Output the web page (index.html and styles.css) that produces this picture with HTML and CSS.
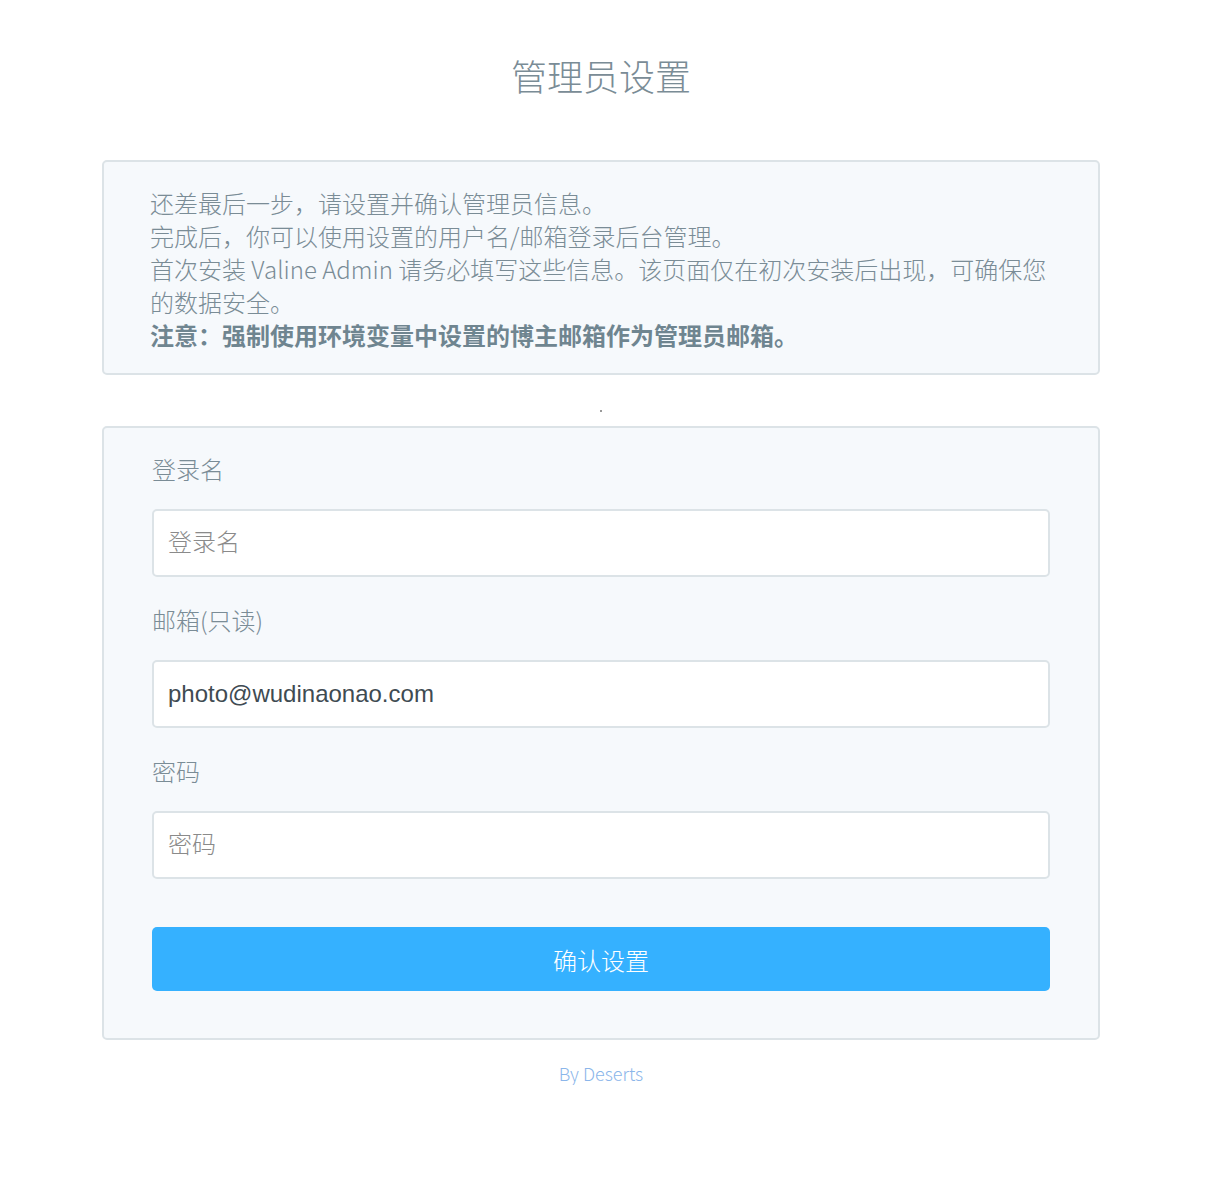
FILE: index.html
```html
<!DOCTYPE html>
<html lang="zh-CN">
<head>
    <meta charset="UTF-8">
    <meta name="viewport" content="width=device-width, initial-scale=1.0">
    <title>管理员设置 - Valine Admin</title>
    <link rel="stylesheet" href="styles.css">
</head>
<body>
<div class="setup_wrap">
    <h1 class="title">管理员设置</h1>

    <div class="notice">
        <p>还差最后一步，请设置并确认管理员信息。</p>
        <p>完成后，你可以使用设置的用户名/邮箱登录后台管理。</p>
        <p>首次安装 Valine Admin 请务必填写这些信息。该页面仅在初次安装后出现，可确保您的数据安全。</p>
        <p class="strong">注意：强制使用环境变量中设置的博主邮箱作为管理员邮箱。</p>
    </div>

    <div class="spacer"><span class="dot"></span></div>

    <form class="setup-form">
        <div class="input-field">
            <label for="name">登录名</label>
            <input type="text" id="name" name="name" placeholder="登录名">
        </div>
        <div class="input-field">
            <label for="email">邮箱(只读)</label>
            <input type="email" id="email" name="email" value="photo@wudinaonao.com" readonly>
        </div>
        <div class="input-field">
            <label for="password">密码</label>
            <input type="password" id="password" name="password" placeholder="密码">
        </div>
        <button type="submit" class="setup-button">确认设置</button>
    </form>

    <div class="footer">By Deserts</div>
</div>
</body>
</html>
```

FILE: styles.css
```css
body {
    font-family: "Noto Sans CJK SC", "Open Sans", sans-serif;
    font-weight: 300;
    margin: 0;
    padding: 0;
    background-color: #fff;
    color: #7a8c96;
}

/* page is laid out as if a 26px scrollbar gutter sat on the right */
.setup_wrap {
    width: 998px;
    margin: 0 0 0 102px;
    padding-top: 47px;
}

.title {
    margin: 0;
    text-align: center;
    font-size: 36px;
    line-height: 56px;
    font-weight: 300;
    color: #7a8c96;
}

.notice {
    margin-top: 57px;
    background-color: #f6f9fc;
    border: 2px solid #dce3e7;
    border-radius: 5px;
    padding: 24px 48px 22px 46px;
    font-size: 24px;
    line-height: 33px;
}

.notice p {
    margin: 0;
}

.notice .strong {
    font-weight: bold;
    color: #6f8590;
}

.spacer {
    height: 51px;
    display: flex;
    justify-content: center;
    align-items: flex-start;
}

.dot {
    width: 2px;
    height: 2px;
    margin-top: 35px;
    background-color: #999;
}

.setup-form {
    background-color: #f6f9fc;
    border: 2px solid #dce3e7;
    border-radius: 5px;
    padding: 24px 48px 47px;
}

.input-field {
    margin-bottom: 26px;
}

.input-field label {
    display: block;
    font-size: 24px;
    line-height: 33px;
    margin-bottom: 24px;
}

.input-field input {
    display: block;
    box-sizing: border-box;
    width: 100%;
    height: 68px;
    padding: 0 14px;
    border: 2px solid #dce3e7;
    border-radius: 5px;
    background-color: #fff;
    font-family: "Liberation Sans", Arial, sans-serif;
    font-size: 24px;
    color: #3f4b52;
    outline: none;
}

.input-field input::placeholder {
    font-family: "Noto Sans CJK SC", sans-serif;
    font-weight: 300;
    font-size: 24px;
    color: #8a8a8a;
}

.setup-button {
    display: block;
    width: 100%;
    height: 64px;
    margin-top: 48px;
    background-color: #35b1ff;
    color: white;
    border: none;
    border-radius: 5px;
    font-family: "Noto Sans CJK SC", sans-serif;
    font-weight: 300;
    font-size: 24px;
    cursor: pointer;
}

.footer {
    margin-top: 21px;
    text-align: center;
    font-size: 18px;
    line-height: 24px;
    color: #8bb6ea;
}
```
